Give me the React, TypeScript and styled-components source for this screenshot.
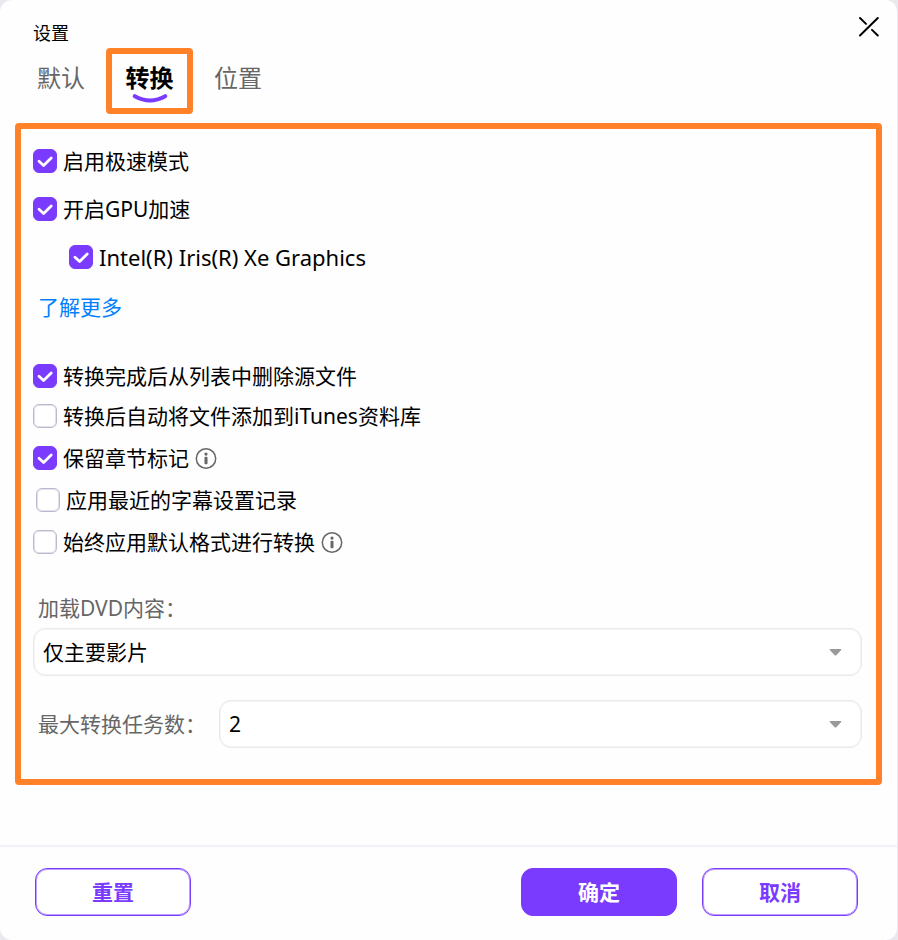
import React, { useId, useState } from "react";
import styled, { createGlobalStyle, css } from "styled-components";

const purple = "#7b3bff";
const orange = "#ff8228";

const GlobalStyle = createGlobalStyle`
  *, *::before, *::after { box-sizing: border-box; }
  html { background: #e9e9ee; }
  body { margin: 0; }
  body, button, input, select {
    font-family: "Noto Sans", "Noto Sans CJK SC", sans-serif;
  }
`;

const Dialog = styled.main`
  display: flex;
  flex-direction: column;
  min-height: 100vh;
  background: #fefefe;
  border-right: 1px solid #e9e9ee;
  border-radius: 12px;
  color: #000;
`;

const Header = styled.header`
  display: flex;
  justify-content: space-between;
  align-items: flex-start;
  height: 48px;
  padding: 15px 16px 0 33px;
`;

const Title = styled.h1`
  margin: 5px 0 0;
  font-size: 18px;
  line-height: 26px;
  font-weight: 400;
`;

const CloseButton = styled.button`
  display: grid;
  padding: 0;
  border: 0;
  background: none;
  cursor: pointer;
`;

const Tabs = styled.nav`
  display: flex;
  align-items: stretch;
  gap: 21px;
  height: 66px;
  padding-left: 37px;
`;

const Tab = styled.button<{ $active?: boolean }>`
  display: flex;
  flex-direction: column;
  align-items: center;
  padding: 12px 0 0;
  border: 0;
  background: none;
  color: #666;
  font-size: 24px;
  line-height: 36px;
  cursor: pointer;
  ${(p) =>
    p.$active &&
    css`
      width: 87px;
      padding-top: 6px;
      border: 6px solid ${orange};
      border-radius: 4px;
      color: #000;
      font-weight: 700;
    `}
`;

const TabSmile = styled.svg`
  display: block;
  flex: none;
  margin-top: -3px;
`;

const Panel = styled.section`
  margin: 9px 15px 0 15px;
  padding: 20px 14px 31px 12px;
  border: 6px solid ${orange};
  border-radius: 4px;
`;

const CheckList = styled.div<{ $gap: number; $top?: number }>`
  display: flex;
  flex-direction: column;
  gap: ${(p) => p.$gap}px;
  margin-top: ${(p) => p.$top ?? 0}px;
`;

const Row = styled.div<{ $indent?: number }>`
  display: flex;
  align-items: center;
  height: 24px;
  padding-left: ${(p) => p.$indent ?? 0}px;
  gap: 6px;
`;

const BoxWrap = styled.span`
  display: grid;
  flex: none;
  width: 24px;
  height: 24px;
  & > * {
    grid-area: 1 / 1;
  }
  svg {
    pointer-events: none;
  }
`;

const Box = styled.input`
  appearance: none;
  width: 24px;
  height: 24px;
  margin: 0;
  border: 1px solid #bcb9cc;
  border-radius: 6px;
  background: #fff;
  box-shadow: inset 0 0 0 1px #e2e0ea;
  cursor: pointer;
  &:checked {
    border-color: ${purple};
    background: ${purple};
    box-shadow: none;
  }
`;

const RowLabel = styled.label<{ $large?: boolean }>`
  font-size: ${(p) => (p.$large ? 22 : 21)}px;
  line-height: 28px;
  white-space: nowrap;
`;

const MoreLink = styled.a`
  display: block;
  width: fit-content;
  margin: 24px 0 0 5px;
  color: #0080ff;
  font-size: 21px;
  line-height: 28px;
  text-decoration: none;
`;

const FieldLabel = styled.label`
  padding-left: 5px;
  color: #666;
  font-size: 21px;
  line-height: 28px;
  white-space: nowrap;
`;

const StackedField = styled.div`
  display: flex;
  flex-direction: column;
  gap: 6px;
  margin-top: 40px;
`;

const InlineField = styled.div`
  display: grid;
  grid-template-columns: 186px 1fr;
  align-items: center;
  margin-top: 24px;
`;

const SelectWrap = styled.div`
  display: grid;
  align-items: center;
  & > * {
    grid-area: 1 / 1;
  }
  svg {
    justify-self: end;
    margin-right: 20px;
    pointer-events: none;
  }
`;

const Select = styled.select`
  appearance: none;
  width: 100%;
  height: 48px;
  padding: 0 40px 0 9px;
  border: 1px solid #e9e9ee;
  border-radius: 12px;
  background: #fff;
  box-shadow: inset 0 0 0 1px #f5f5f8;
  color: #000;
  font-size: 21px;
  line-height: 28px;
`;

const Footer = styled.footer`
  display: flex;
  align-items: center;
  gap: 25px;
  height: 95px;
  margin-top: auto;
  padding: 0 39px 4px 35px;
  border-top: 2px solid #f2f2f8;
`;

const ActionButton = styled.button<{ $primary?: boolean; $start?: boolean }>`
  width: 156px;
  height: 48px;
  margin-right: ${(p) => (p.$start ? "auto" : "0")};
  padding: 0;
  border: 1px solid ${purple};
  border-radius: 12px;
  background: ${(p) => (p.$primary ? purple : "#fff")};
  box-shadow: ${(p) => (p.$primary ? "none" : "inset 0 0 0 1px #bd9dff")};
  color: ${(p) => (p.$primary ? "#fff" : purple)};
  font-size: 21px;
  line-height: 28px;
  font-weight: 700;
  cursor: pointer;
`;

const InfoIcon = () => (
  <svg width="22" height="22" viewBox="0 0 22 22" role="img" aria-label="说明">
    <circle cx="11" cy="11.5" r="9.7" fill="none" stroke="#666" strokeWidth="1.5" />
    <circle cx="11" cy="7.1" r="1.6" fill="#666" />
    <rect x="9.5" y="9.7" width="3" height="7.5" rx="1" fill="#666" />
  </svg>
);

const Arrow = () => (
  <svg width="13" height="8" viewBox="0 0 13 8" aria-hidden="true">
    <path d="M1.2 0.9h10.6q1 .4.4 1.2L7.3 7.2q-.8.8-1.6 0L.8 2.1Q.2 1.3 1.2.9Z" fill="#999" />
  </svg>
);

interface OptionProps {
  label: string;
  checked?: boolean;
  indent?: number;
  info?: boolean;
  large?: boolean;
}

function Option({ label, checked = false, indent, info, large }: OptionProps) {
  const id = useId();
  const [on, setOn] = useState(checked);
  return (
    <Row $indent={indent}>
      <BoxWrap>
        <Box id={id} type="checkbox" checked={on} onChange={() => setOn(!on)} />
        {on && (
          <svg width="24" height="24" viewBox="0 0 24 24" aria-hidden="true">
            <path
              d="M6 12.2l4.6 4.3L18.2 9"
              fill="none"
              stroke="#fff"
              strokeWidth="2.8"
              strokeLinecap="round"
              strokeLinejoin="round"
            />
          </svg>
        )}
      </BoxWrap>
      <RowLabel htmlFor={id} $large={large}>
        {label}
      </RowLabel>
      {info && <InfoIcon />}
    </Row>
  );
}

export default function App() {
  return (
    <>
      <GlobalStyle />
      <Dialog>
        <Header>
          <Title>设置</Title>
          <CloseButton type="button" aria-label="关闭">
            <svg width="24" height="24" viewBox="0 0 24 24" aria-hidden="true">
              <path
                d="M3 20.5L20.8 3M3 3l6 5.9M15 14.9l5.8 5.6"
                fill="none"
                stroke="#000"
                strokeWidth="2"
                strokeLinecap="round"
              />
            </svg>
          </CloseButton>
        </Header>
        <Tabs>
          <Tab type="button">默认</Tab>
          <Tab type="button" $active>
            转换
            <TabSmile width="36" height="12" viewBox="0 0 36 12" aria-hidden="true">
              <path
                d="M2.8 3.2Q18 11.6 33.2 3.2"
                fill="none"
                stroke={purple}
                strokeWidth="4"
                strokeLinecap="round"
              />
            </TabSmile>
          </Tab>
          <Tab type="button">位置</Tab>
        </Tabs>
        <Panel>
          <CheckList $gap={24}>
            <Option label="启用极速模式" checked />
            <Option label="开启GPU加速" checked />
            <Option label="Intel(R) Iris(R) Xe Graphics" checked indent={36} large />
          </CheckList>
          <MoreLink href="#more">了解更多</MoreLink>
          <CheckList $gap={16} $top={43}>
            <Option label="转换完成后从列表中删除源文件" checked />
            <Option label="转换后自动将文件添加到iTunes资料库" />
          </CheckList>
          <CheckList $gap={18} $top={18}>
            <Option label="保留章节标记" checked info />
            <Option label="应用最近的字幕设置记录" indent={3} />
            <Option label="始终应用默认格式进行转换" info />
          </CheckList>
          <StackedField>
            <FieldLabel htmlFor="dvd">加载DVD内容：</FieldLabel>
            <SelectWrap>
              <Select id="dvd" defaultValue="main">
                <option value="main">仅主要影片</option>
              </Select>
              <Arrow />
            </SelectWrap>
          </StackedField>
          <InlineField>
            <FieldLabel htmlFor="tasks">最大转换任务数：</FieldLabel>
            <SelectWrap>
              <Select id="tasks" defaultValue="2">
                <option value="2">2</option>
              </Select>
              <Arrow />
            </SelectWrap>
          </InlineField>
        </Panel>
        <Footer>
          <ActionButton type="button" $start>
            重置
          </ActionButton>
          <ActionButton type="button" $primary>
            确定
          </ActionButton>
          <ActionButton type="button">取消</ActionButton>
        </Footer>
      </Dialog>
    </>
  );
}
